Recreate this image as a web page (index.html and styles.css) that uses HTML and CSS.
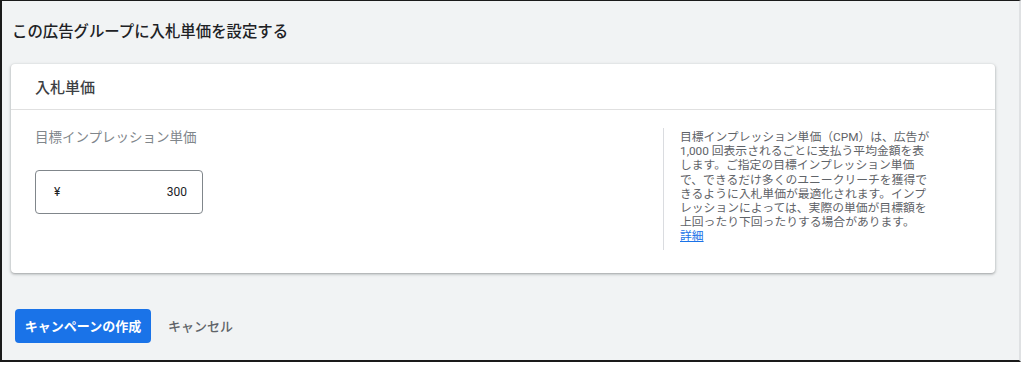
FILE: index.html
```html
<!DOCTYPE html>
<html lang="ja">
<head>
<meta charset="utf-8">
<link rel="stylesheet" href="styles.css">
</head>
<body>
<div class="frame">
  <h1 class="page-title">この広告グループに入札単価を設定する</h1>
  <section class="card">
    <div class="card-header">入札単価</div>
    <div class="card-body">
      <div class="field">
        <div class="field-label">目標インプレッション単価</div>
        <div class="input-box">
          <span class="currency">¥</span>
          <span class="value">300</span>
        </div>
      </div>
      <div class="help">
        目標インプレッション単価（CPM）は、広告が<br>1,000 回表示されるごとに支払う平均金額を表<br>します。ご指定の目標インプレッション単価<br>で、できるだけ多くのユニークリーチを獲得で<br>きるように入札単価が最適化されます。インプ<br>レッションによっては、実際の単価が目標額を<br>上回ったり下回ったりする場合があります。<br><a class="help-link" href="#">詳細</a>
      </div>
    </div>
  </section>
  <div class="actions">
    <button class="btn-primary">キャンペーンの作成</button>
    <button class="btn-text">キャンセル</button>
  </div>
</div>
</body>
</html>
```

FILE: styles.css
```css
html, body {
  margin: 0;
  padding: 0;
  background: #ffffff;
}

body {
  font-family: Roboto, "Noto Sans CJK JP", "Noto Sans", sans-serif;
  color: #3c4043;
}

.frame {
  box-sizing: border-box;
  width: 1021px;
  height: 362px;
  background: #f1f3f4;
  border-top: 1px solid #1a1a1a;
  border-left: 2px solid #1a1a1a;
  border-bottom: 2px solid #1a1a1a;
  border-right: 2px solid #dfe1e3;
  padding: 0 24px 0 9px;
}

.page-title {
  margin: 0;
  padding: 20px 0 0 1px;
  font-size: 15.4px;
  line-height: 22px;
  font-weight: 500;
  color: #202124;
}

.card {
  margin-top: 21px;
  background: #ffffff;
  border-radius: 4px;
  box-shadow: 0 1px 2px rgba(60, 64, 67, 0.3), 0 1px 3px 1px rgba(60, 64, 67, 0.15);
}

.card-header {
  height: 46px;
  box-sizing: border-box;
  padding: 0 24px;
  display: flex;
  align-items: center;
  font-size: 15px;
  font-weight: 500;
  color: #3c4043;
  border-bottom: 1px solid #e0e0e0;
}

.card-body {
  display: flex;
  align-items: flex-start;
  padding: 17px 24px 23px 24px;
}

.field {
  flex: 1;
}

.field-label {
  font-size: 13.5px;
  line-height: 20px;
  color: #80868b;
}

.input-box {
  margin-top: 23px;
  width: 168px;
  height: 44px;
  box-sizing: border-box;
  border: 1px solid #80868b;
  border-radius: 4px;
  display: flex;
  align-items: center;
  justify-content: space-between;
  padding: 0 15px 0 18px;
  font-size: 12px;
  color: #202124;
}

.help {
  width: 252px;
  margin: 1px 39px 0 0;
  padding: 2px 0 6px 16px;
  border-left: 1px solid #dadce0;
  font-size: 11.8px;
  line-height: 14.2px;
  white-space: nowrap;
  color: #5f6368;
}

.help-link {
  color: #1a73e8;
  text-decoration: underline;
}

.actions {
  margin-top: 36px;
  padding-left: 4px;
  display: flex;
  align-items: center;
  gap: 6px;
}

.btn-primary {
  height: 34px;
  width: 136px;
  border: none;
  border-radius: 4px;
  background: #1a73e8;
  color: #ffffff;
  font-family: inherit;
  font-size: 13px;
  font-weight: 700;
  padding: 0;
}

.btn-text {
  height: 34px;
  border: none;
  background: transparent;
  color: #5f6368;
  font-family: inherit;
  font-size: 13px;
  font-weight: 500;
  padding: 0 11px;
}
```
